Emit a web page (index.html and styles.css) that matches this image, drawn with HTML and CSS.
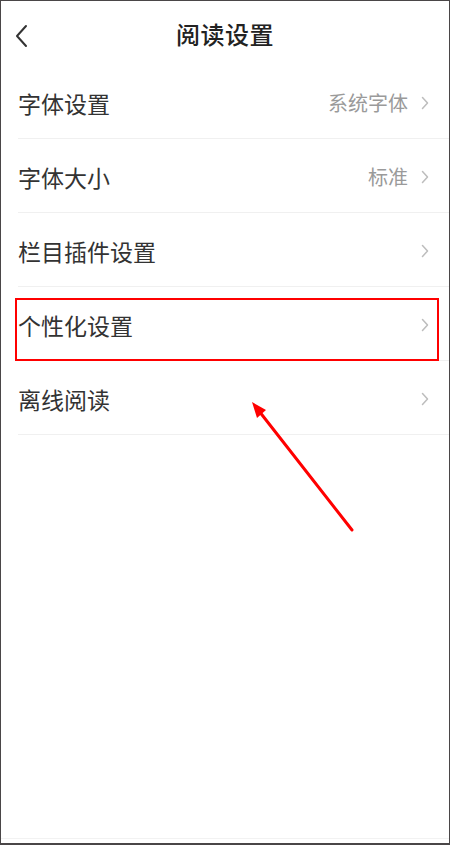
FILE: index.html
```html
<!DOCTYPE html>
<html lang="zh-CN">
<head>
<meta charset="utf-8">
<title>阅读设置</title>
<link rel="stylesheet" href="styles.css">
</head>
<body>
<div class="frame">
  <header class="topbar">
    <span class="back">
      <svg width="14" height="24" viewBox="0 0 14 24"><path d="M11 2 L2 12 L11 22" fill="none" stroke="#333" stroke-width="2" stroke-linecap="round" stroke-linejoin="round"/></svg>
    </span>
    <h1 class="title">阅读设置</h1>
  </header>
  <ul class="list">
    <li class="row"><span class="label">字体设置</span><span class="value">系统字体</span><span class="chev"><svg width="8" height="14" viewBox="0 0 8 14"><path d="M1.5 1.5 L6.5 7 L1.5 12.5" fill="none" stroke="#bdbdbd" stroke-width="1.5" stroke-linecap="round" stroke-linejoin="round"/></svg></span></li>
    <li class="row"><span class="label">字体大小</span><span class="value">标准</span><span class="chev"><svg width="8" height="14" viewBox="0 0 8 14"><path d="M1.5 1.5 L6.5 7 L1.5 12.5" fill="none" stroke="#bdbdbd" stroke-width="1.5" stroke-linecap="round" stroke-linejoin="round"/></svg></span></li>
    <li class="row"><span class="label">栏目插件设置</span><span class="value"></span><span class="chev"><svg width="8" height="14" viewBox="0 0 8 14"><path d="M1.5 1.5 L6.5 7 L1.5 12.5" fill="none" stroke="#bdbdbd" stroke-width="1.5" stroke-linecap="round" stroke-linejoin="round"/></svg></span></li>
    <li class="row"><span class="label">个性化设置</span><span class="value"></span><span class="chev"><svg width="8" height="14" viewBox="0 0 8 14"><path d="M1.5 1.5 L6.5 7 L1.5 12.5" fill="none" stroke="#bdbdbd" stroke-width="1.5" stroke-linecap="round" stroke-linejoin="round"/></svg></span></li>
    <li class="row"><span class="label">离线阅读</span><span class="value"></span><span class="chev"><svg width="8" height="14" viewBox="0 0 8 14"><path d="M1.5 1.5 L6.5 7 L1.5 12.5" fill="none" stroke="#bdbdbd" stroke-width="1.5" stroke-linecap="round" stroke-linejoin="round"/></svg></span></li>
  </ul>
  <div class="spacer"></div>
  <div class="bottombar"></div>
  <div class="highlight"></div>
  <svg class="annot" width="450" height="845" viewBox="0 0 450 845">
    <line x1="352" y1="530" x2="259" y2="411" stroke="#ff0000" stroke-width="3" stroke-linecap="round"/>
    <polygon points="252,402 266,410 257,418" fill="#ff0000"/>
  </svg>
</div>
</body>
</html>
```

FILE: styles.css
```css
* { box-sizing: border-box; }
html, body { margin: 0; padding: 0; background: #fff; }
body {
  font-family: "Noto Sans CJK SC", "Noto Sans", sans-serif;
  color: #333;
}
.frame {
  position: relative;
  width: 450px;
  height: 845px;
  border: 1px solid #4a4647;
  border-bottom-width: 2px;
  display: flex;
  flex-direction: column;
  background: #fff;
  overflow: hidden;
}
.topbar {
  height: 64px;
  display: flex;
  align-items: center;
  justify-content: center;
  position: relative;
  flex: none;
}
.back {
  position: absolute;
  left: 14px;
  top: 23px;
  display: flex;
}
.title {
  margin: 0;
  font-size: 24px;
  font-weight: 500;
  color: #222;
  letter-spacing: 0.5px;
  line-height: 1;
  padding-top: 2px;
}
.list {
  list-style: none;
  margin: 0 0 0 17px;
  padding: 0;
  flex: none;
}
.row {
  height: 74px;
  border-bottom: 1px solid #f0f0f0;
  display: flex;
  align-items: center;
  padding-right: 20px;
  padding-top: 3px;
}
.label {
  flex: 1;
  font-size: 23px;
  color: #333;
  line-height: 1;
}
.value {
  font-size: 20px;
  color: #9a9a9a;
  line-height: 1;
  margin-right: 13px;
}
.chev { display: flex; }
.spacer { flex: 1; }
.bottombar {
  height: 5px;
  border-top: 1px solid #f2f2f2;
  flex: none;
}
.highlight {
  position: absolute;
  left: 14px;
  top: 297px;
  width: 424px;
  height: 63px;
  border: 2px solid #ff0000;
}
.annot {
  position: absolute;
  left: -1px;
  top: -1px;
  pointer-events: none;
}
```
